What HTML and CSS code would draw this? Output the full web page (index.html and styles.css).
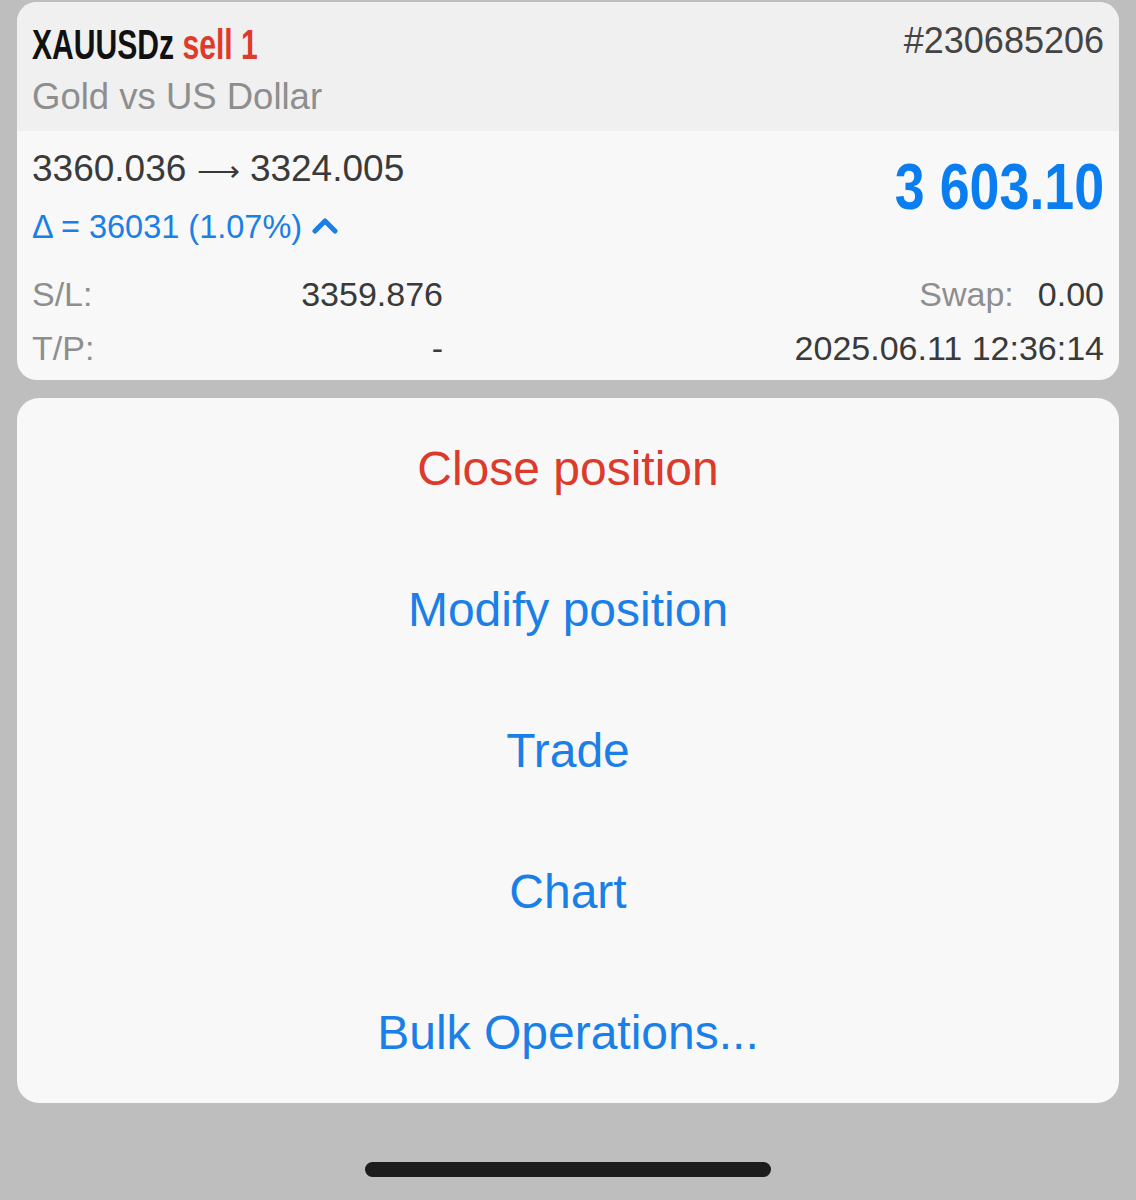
FILE: index.html
```html
<!DOCTYPE html>
<html>
<head>
<meta charset="utf-8">
<link rel="stylesheet" href="styles.css">
</head>
<body>
<div class="screen">
  <div class="card">
    <div class="card-head">
      <div class="head-row">
        <div class="title"><span class="sym">XAUUSDz</span> <span class="side">sell 1</span></div>
        <div class="ticket">#230685206</div>
      </div>
      <div class="desc">Gold vs US Dollar</div>
    </div>
    <div class="card-body">
      <div class="price-row">
        <div class="price-left">
          <div class="prices">3360.036 <span class="arrow">⟶</span> 3324.005</div>
          <div class="delta">Δ = 36031 (1.07%)
            <svg class="chev" width="26" height="18" viewBox="0 0 26 18"><polyline points="3,15 13,5 23,15" fill="none" stroke="#1a7fe6" stroke-width="5" stroke-linecap="round" stroke-linejoin="round"/></svg>
          </div>
        </div>
        <div class="profit">3 603.10</div>
      </div>
      <div class="info-row">
        <div class="pair"><span class="lbl">S/L:</span><span class="val">3359.876</span></div>
        <div class="right"><span class="lbl">Swap:</span><span class="val swapv">0.00</span></div>
      </div>
      <div class="info-row">
        <div class="pair"><span class="lbl">T/P:</span><span class="val">-</span></div>
        <div class="right"><span class="val">2025.06.11 12:36:14</span></div>
      </div>
    </div>
  </div>
  <div class="menu">
    <div class="item danger">Close position</div>
    <div class="item">Modify position</div>
    <div class="item">Trade</div>
    <div class="item">Chart</div>
    <div class="item">Bulk Operations...</div>
  </div>
  <div class="home-area"><div class="home-bar"></div></div>
</div>
</body>
</html>
```

FILE: styles.css
```css
html, body {
  margin: 0;
  padding: 0;
  background: #bebebe;
}
body {
  font-family: "Liberation Sans", Arial, sans-serif;
  width: 1136px;
  height: 1200px;
  overflow: hidden;
}
.screen {
  padding: 2px 17px 0 17px;
  display: flex;
  flex-direction: column;
}
.card {
  background: #f8f8f8;
  border-radius: 20px;
  overflow: hidden;
  margin-bottom: 18px;
}
.card-head {
  background: #f0f0f0;
  height: 129px;
  box-sizing: border-box;
  padding: 20px 15px 0 15px;
}
.head-row {
  display: flex;
  justify-content: space-between;
  align-items: flex-start;
  height: 44px;
}
.title {
  font-weight: bold;
  font-size: 43px;
  line-height: 44px;
  white-space: nowrap;
  transform: scaleX(0.7);
  transform-origin: left center;
}
.sym { color: #111; }
.side { color: #e03a2a; }
.ticket {
  font-size: 36px;
  line-height: 40px;
  color: #444;
  margin-top: -1px;
}
.desc {
  font-size: 36.5px;
  line-height: 44px;
  color: #8e8e8e;
  margin-top: 9px;
}
.card-body {
  height: 249px;
  box-sizing: border-box;
  padding: 16px 15px 0 15px;
}
.price-row {
  display: flex;
  justify-content: space-between;
  align-items: flex-start;
  height: 120px;
}
.prices {
  font-size: 37px;
  line-height: 44px;
  color: #3a3a3a;
}
.arrow {
  font-family: "DejaVu Sans", sans-serif;
  font-size: 30px;
  font-weight: 200;
}
.delta {
  font-size: 32.5px;
  line-height: 40px;
  color: #1a7fe6;
  margin-top: 14px;
  display: flex;
  align-items: center;
  gap: 10px;
}
.chev { margin-top: -4px; }
.profit {
  font-weight: bold;
  font-size: 64px;
  line-height: 72px;
  color: #0a7ef0;
  margin-top: 4px;
  white-space: nowrap;
  transform: scaleX(0.84);
  transform-origin: right center;
}
.info-row {
  display: flex;
  justify-content: space-between;
  align-items: center;
  height: 54px;
  font-size: 34px;
  color: #3a3a3a;
}
.pair {
  display: flex;
  justify-content: space-between;
  width: 411px;
}
.lbl { color: #8e8e8e; }
.right { display: flex; align-items: center; }
.swapv { margin-left: 24px; }
.menu {
  background: #f8f8f8;
  border-radius: 22px;
  display: flex;
  flex-direction: column;
}
.item {
  height: 141px;
  display: flex;
  align-items: center;
  justify-content: center;
  font-size: 48px;
  color: #1a7fe6;
}
.item.danger { color: #dc3b2c; }
.home-area {
  padding-top: 59px;
  display: flex;
  justify-content: center;
}
.home-bar {
  width: 406px;
  height: 15px;
  border-radius: 8px;
  background: #1c1c1c;
}
```
